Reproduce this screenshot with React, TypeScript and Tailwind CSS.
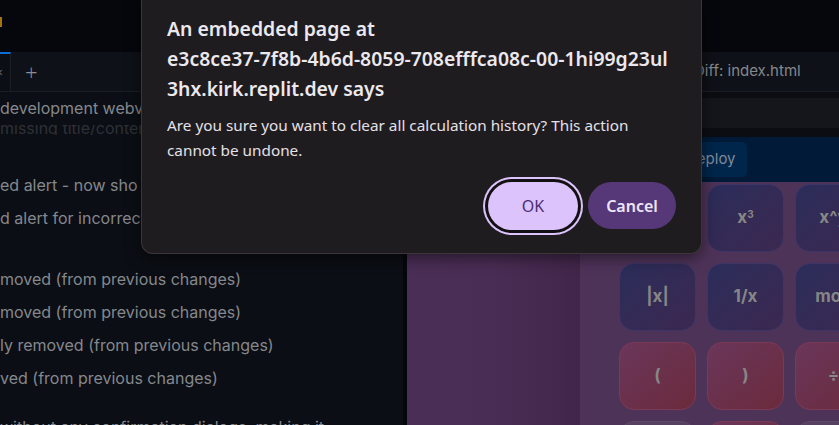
import React from 'react';

const leftLines = [
  { text: 'ed alert - now sho', mt: 'mt-[34px]' },
  { text: 'd alert for incorrect', mt: 'mt-0' },
  { text: 'moved (from previous changes)', mt: 'mt-[28px]' },
  { text: 'moved (from previous changes)', mt: 'mt-0' },
  { text: 'ly removed (from previous changes)', mt: 'mt-0' },
  { text: 'ved (from previous changes)', mt: 'mt-0' },
  { text: ' without any confirmation dialogs, making it', mt: 'mt-[16px]' },
];

type Key = { label: React.ReactNode; tone: 'blue' | 'red' | 'grey' };

const keyRows: Key[][] = [
  [
    { label: 'x²', tone: 'blue' },
    { label: <>x<sup className="text-[10px]">3</sup></>, tone: 'blue' },
    { label: 'x^y', tone: 'blue' },
  ],
  [
    { label: '|x|', tone: 'blue' },
    { label: '1/x', tone: 'blue' },
    { label: 'mod', tone: 'blue' },
  ],
  [
    { label: '(', tone: 'red' },
    { label: ')', tone: 'red' },
    { label: '÷', tone: 'red' },
  ],
  [
    { label: 'C', tone: 'grey' },
    { label: '⌫', tone: 'red' },
    { label: '%', tone: 'grey' },
  ],
];

const toneClass = {
  blue: 'bg-gradient-to-br from-[#2b2d5b] to-[#3b2850] border-[#3d3566]',
  red: 'bg-gradient-to-br from-[#6a365a] to-[#6b2a3c] border-[#7a3a55]',
  grey: 'bg-[#55405f] border-[#5d4868]',
};

function CalcKey({ k }: { k: Key }) {
  return (
    <div
      className={`w-[77px] h-[68px] shrink-0 rounded-[15px] border flex items-center justify-center text-[17px] font-bold text-[#868686] ${toneClass[k.tone]}`}
    >
      <span>{k.label}</span>
    </div>
  );
}

function LeftPanel() {
  return (
    <div className="w-[403px] h-full shrink-0 flex flex-col bg-[#0b0e14] overflow-hidden">
      <div className="h-[52px] shrink-0 bg-[#05070c] flex items-center">
        <div className="w-[2px] h-[10px] bg-[#a8720e] -mt-[9px]" />
      </div>
      <div className="h-[40px] shrink-0 bg-[#0e1117] border-b border-[#1b1e25] flex items-stretch">
        <div className="w-[11px] border-t-2 border-[#0a6fd6] border-r border-r-[#1b1e25] bg-[#0b0e14] flex items-center justify-end pr-[7px] text-[#6c6f75] text-[13px]">
          ×
        </div>
        <div className="ml-[14px] flex items-center text-[#8a8d93] text-[22px] font-light leading-none">+</div>
      </div>
      <div className="shrink-0 flex flex-col text-[16px] leading-[33px] text-[#85888d] whitespace-nowrap" style={{ fontFamily: 'Inter, sans-serif' }}>
        <div className="h-[33px] shrink-0">development webview</div>
        <div className="h-[10px] shrink-0 overflow-hidden">
          <div className="-mt-[7px] leading-[20px] text-[#2e3137]">missing title/content</div>
        </div>
        {leftLines.map((l, i) => (
          <div key={i} className={`h-[33px] shrink-0 ${l.mt}`}>
            {l.text}
          </div>
        ))}
      </div>
    </div>
  );
}

function RightPanel() {
  return (
    <div className="flex-1 h-full flex flex-col bg-[#0b0d12] overflow-hidden">
      <div className="h-[52px] bg-[#05070c] shrink-0" />
      <div className="h-[40px] shrink-0 bg-[#0e1117] border-b border-[#1b1e25] flex items-center pl-[287px] text-[15px] text-[#85888d] whitespace-nowrap" style={{ fontFamily: 'Inter, sans-serif' }}>
        Diff: index.html
      </div>
      <div className="h-[6px] shrink-0" />
      <div className="h-[30px] shrink-0 bg-[#14161c]" />
      <div className="h-[9px] shrink-0" />
      <div className="h-[45px] shrink-0 bg-[#001a37] flex items-center pl-[268px]">
        <div className="h-[35px] px-[11px] rounded-[5px] bg-[#00264b] flex items-center text-[15px] text-[#7f8a98]" style={{ fontFamily: 'Inter, sans-serif' }}>
          Deploy
        </div>
      </div>
      <div className="flex-1 flex bg-[#4e3359] min-h-0">
        <div className="w-[173px] shrink-0 relative overflow-hidden bg-gradient-to-r from-[#4b2e56] via-[#4a2d54] to-[#42264a]">
          <div className="absolute left-[55px] top-[-35px] w-[74px] h-[74px] rounded-full bg-white/[0.035]" />
        </div>
        <div className="flex-1 pl-[39px] pt-[2px] flex flex-col gap-[11px] overflow-hidden" style={{ fontFamily: 'Inter, sans-serif' }}>
          {keyRows.map((row, r) => (
            <div key={r} className="flex gap-[11px] shrink-0">
              {row.map((k, c) => (
                <CalcKey key={c} k={k} />
              ))}
            </div>
          ))}
        </div>
      </div>
    </div>
  );
}

function AlertDialog() {
  return (
    <div
      className="absolute left-[141px] top-0 w-[561px] h-[254px] bg-[#1f1c20] border border-t-0 border-[#3e3538] rounded-b-[12px] shadow-[0_4px_16px_rgba(0,0,0,0.5)] px-[25px] pt-[14px] flex flex-col"
      style={{ fontFamily: '"Noto Sans", "Open Sans", sans-serif' }}
    >
      <div className="text-[19.4px] leading-[30px] font-semibold text-[#ebe8ee] whitespace-nowrap">
        An embedded page at
        <br />
        e3c8ce37-7f8b-4b6d-8059-708efffca08c-00-1hi99g23ul
        <br />
        3hx.kirk.replit.dev says
      </div>
      <div className="mt-[9px] text-[15.3px] leading-[25px] text-[#e4e1e7] whitespace-nowrap">
        Are you sure you want to clear all calculation history? This action
        <br />
        cannot be undone.
      </div>
      <div className="mt-auto mb-[23px] flex justify-end gap-[10px]">
        <button className="w-[90px] h-[48px] rounded-full bg-[#dcc3fb] text-[#4a2e74] text-[16px] shadow-[0_0_0_3px_#121013,0_0_0_5px_#dcc3fb]">
          OK
        </button>
        <button className="w-[88px] h-[47px] rounded-full bg-[#563879] text-[#efe5fb] text-[16px] font-semibold">
          Cancel
        </button>
      </div>
    </div>
  );
}

export default function App() {
  return (
    <div className="relative w-[839px] h-[425px] overflow-hidden flex bg-[#05070c]">
      <LeftPanel />
      <div className="w-[4px] shrink-0 bg-[#05070c]" />
      <RightPanel />
      <AlertDialog />
    </div>
  );
}
